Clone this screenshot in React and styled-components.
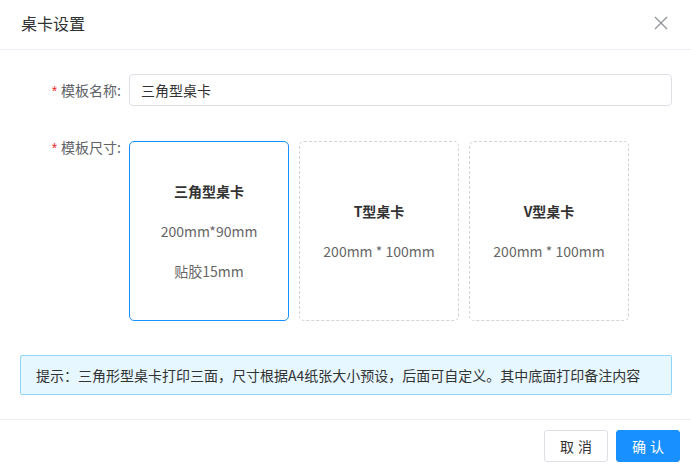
import React from "react";
import styled, { createGlobalStyle } from "styled-components";

const Global = createGlobalStyle`
  html, body { margin: 0; padding: 0; background: #fff; }
  body { font-family: "Noto Sans CJK SC", "Noto Sans", sans-serif; color: #333; }
  * { box-sizing: border-box; }
`;

const Dialog = styled.div`
  width: 691px;
  height: 472px;
  background: #fff;
  display: flex;
  flex-direction: column;
`;

const Header = styled.div`
  height: 51px;
  padding: 11px 20px 0 21px;
  border-bottom: 1px solid #ebeef5;
  display: flex;
  justify-content: space-between;
  align-items: flex-start;
`;

const Title = styled.div`
  font-size: 16px;
  line-height: 24px;
  color: #303133;
`;

const Close = styled.button`
  border: 0;
  background: none;
  padding: 0;
  margin-top: 5px;
  margin-right: 3px;
  width: 14px;
  height: 14px;
  display: flex;
  cursor: pointer;
`;

const Body = styled.div`
  padding: 24px 19px 24px 20px;
  display: flex;
  flex-direction: column;
  border-bottom: 1px solid #ebeef5;
`;

const FormItem = styled.div`
  display: flex;
  align-items: flex-start;
  margin-bottom: ${(p) => p.$mb || 0}px;
`;

const Label = styled.label`
  width: 109px;
  padding-right: 8px;
  text-align: right;
  font-size: 14px;
  line-height: 32px;
  color: #606266;
  flex-shrink: 0;
`;

const Star = styled.span`
  color: #f5222d;
  margin-right: 4px;
  font-family: "Liberation Sans", sans-serif;
`;

const Input = styled.input`
  flex: 1;
  height: 32px;
  border: 1px solid #dcdfe6;
  border-radius: 4px;
  padding: 0 11px;
  font-family: inherit;
  font-size: 14px;
  color: #333;
  outline: none;
`;

const Cards = styled.div`
  display: flex;
  gap: 10px;
  padding-top: 10px;
`;

const Card = styled.div`
  width: 160px;
  height: 180px;
  border: 1px ${(p) => (p.$active ? "solid #1890ff" : "dashed #d3d3d3")};
  border-radius: 5px;
  display: flex;
  flex-direction: column;
  align-items: center;
  justify-content: center;
  gap: 20px;
  cursor: pointer;
`;

const CardTitle = styled.div`
  font-size: 14px;
  line-height: 20px;
  font-weight: 700;
  color: #333;
`;

const CardLine = styled.div`
  font-size: 14px;
  line-height: 20px;
  color: #666;
`;

const Tip = styled.div`
  margin-top: 34px;
  height: 40px;
  border: 1px solid #91d5ff;
  background: #e6f7ff;
  border-radius: 2px;
  padding: 0 15px;
  display: flex;
  align-items: center;
  font-size: 14px;
  color: #333;
  white-space: nowrap;
`;

const Footer = styled.div`
  flex: 1;
  padding: 10px 11px 10px 0;
  display: flex;
  justify-content: flex-end;
  gap: 8px;
  align-items: flex-start;
`;

const Button = styled.button`
  width: 64px;
  height: 32px;
  border-radius: 3px;
  border: 1px solid ${(p) => (p.$primary ? "#1890ff" : "#dcdfe6")};
  background: ${(p) => (p.$primary ? "#1890ff" : "#fff")};
  color: ${(p) => (p.$primary ? "#fff" : "#333")};
  font-family: inherit;
  font-size: 14px;
  letter-spacing: 4px;
  padding: 0 0 0 4px;
  cursor: pointer;
`;

const cards = [
  { title: "三角型桌卡", lines: ["200mm*90mm", "贴胶15mm"], active: true },
  { title: "T型桌卡", lines: ["200mm * 100mm"] },
  { title: "V型桌卡", lines: ["200mm * 100mm"] },
];

export default function App() {
  return (
    <>
      <Global />
      <Dialog>
        <Header>
          <Title>桌卡设置</Title>
          <Close aria-label="close">
            <svg width="14" height="14" viewBox="0 0 14 14">
              <path d="M1 1L13 13M13 1L1 13" stroke="#909399" strokeWidth="1.3" fill="none" />
            </svg>
          </Close>
        </Header>
        <Body>
          <FormItem $mb={24}>
            <Label>
              <Star>*</Star>模板名称:
            </Label>
            <Input defaultValue="三角型桌卡" />
          </FormItem>
          <FormItem>
            <Label>
              <Star>*</Star>模板尺寸:
            </Label>
            <Cards>
              {cards.map((c) => (
                <Card key={c.title} $active={c.active}>
                  <CardTitle>{c.title}</CardTitle>
                  {c.lines.map((l) => (
                    <CardLine key={l}>{l}</CardLine>
                  ))}
                </Card>
              ))}
            </Cards>
          </FormItem>
          <Tip>提示：三角形型桌卡打印三面，尺寸根据A4纸张大小预设，后面可自定义。其中底面打印备注内容</Tip>
        </Body>
        <Footer>
          <Button>取消</Button>
          <Button $primary>确认</Button>
        </Footer>
      </Dialog>
    </>
  );
}
